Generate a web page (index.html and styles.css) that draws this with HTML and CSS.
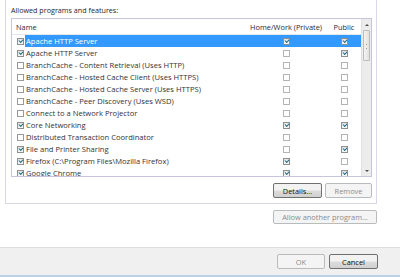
FILE: index.html
```html
<!DOCTYPE html>
<html lang="en">
<head>
    <meta charset="UTF-8">
    <title>Allowed programs</title>
    <link rel="stylesheet" href="styles.css">
</head>
<body>
    <div class="window">
        <div class="content">
            <div class="group">
                <p class="caption">Allowed programs and features:</p>
                <div class="listbox">
                    <div class="list">
                        <div class="list-head">
                            <span class="col-name">Name</span>
                            <span class="col-check">Home/Work (Private)</span>
                            <span class="col-check">Public</span>
                        </div>
                        <div class="rows">
                            <div class="row selected">
                                <span class="col-name"><span class="cb on"></span><span class="label">Apache HTTP Server</span></span>
                                <span class="col-check"><span class="cb on"></span></span>
                                <span class="col-check"><span class="cb on"></span></span>
                            </div>
                            <div class="row">
                                <span class="col-name"><span class="cb on"></span><span class="label">Apache HTTP Server</span></span>
                                <span class="col-check"><span class="cb"></span></span>
                                <span class="col-check"><span class="cb on"></span></span>
                            </div>
                            <div class="row">
                                <span class="col-name"><span class="cb"></span><span class="label">BranchCache - Content Retrieval (Uses HTTP)</span></span>
                                <span class="col-check"><span class="cb"></span></span>
                                <span class="col-check"><span class="cb"></span></span>
                            </div>
                            <div class="row">
                                <span class="col-name"><span class="cb"></span><span class="label">BranchCache - Hosted Cache Client (Uses HTTPS)</span></span>
                                <span class="col-check"><span class="cb"></span></span>
                                <span class="col-check"><span class="cb"></span></span>
                            </div>
                            <div class="row">
                                <span class="col-name"><span class="cb"></span><span class="label">BranchCache - Hosted Cache Server (Uses HTTPS)</span></span>
                                <span class="col-check"><span class="cb"></span></span>
                                <span class="col-check"><span class="cb"></span></span>
                            </div>
                            <div class="row">
                                <span class="col-name"><span class="cb"></span><span class="label">BranchCache - Peer Discovery (Uses WSD)</span></span>
                                <span class="col-check"><span class="cb"></span></span>
                                <span class="col-check"><span class="cb"></span></span>
                            </div>
                            <div class="row">
                                <span class="col-name"><span class="cb"></span><span class="label">Connect to a Network Projector</span></span>
                                <span class="col-check"><span class="cb"></span></span>
                                <span class="col-check"><span class="cb"></span></span>
                            </div>
                            <div class="row">
                                <span class="col-name"><span class="cb on"></span><span class="label">Core Networking</span></span>
                                <span class="col-check"><span class="cb on"></span></span>
                                <span class="col-check"><span class="cb on"></span></span>
                            </div>
                            <div class="row">
                                <span class="col-name"><span class="cb"></span><span class="label">Distributed Transaction Coordinator</span></span>
                                <span class="col-check"><span class="cb"></span></span>
                                <span class="col-check"><span class="cb"></span></span>
                            </div>
                            <div class="row">
                                <span class="col-name"><span class="cb on"></span><span class="label">File and Printer Sharing</span></span>
                                <span class="col-check"><span class="cb"></span></span>
                                <span class="col-check"><span class="cb on"></span></span>
                            </div>
                            <div class="row">
                                <span class="col-name"><span class="cb on"></span><span class="label">Firefox (C:\Program Files\Mozilla Firefox)</span></span>
                                <span class="col-check"><span class="cb on"></span></span>
                                <span class="col-check"><span class="cb"></span></span>
                            </div>
                            <div class="row">
                                <span class="col-name"><span class="cb on"></span><span class="label">Google Chrome</span></span>
                                <span class="col-check"><span class="cb on"></span></span>
                                <span class="col-check"><span class="cb on"></span></span>
                            </div>
                        </div>
                    </div>
                    <div class="scrollbar">
                        <span class="arrow up"></span>
                        <span class="track"><span class="thumb"></span></span>
                        <span class="arrow down"></span>
                    </div>
                </div>
                <div class="list-actions">
                    <button class="btn details">Details...</button>
                    <button class="btn remove" disabled>Remove</button>
                </div>
            </div>
            <div class="add-row">
                <button class="btn add" disabled>Allow another program...</button>
            </div>
        </div>
        <div class="footer">
            <button class="btn ok" disabled>OK</button>
            <button class="btn cancel">Cancel</button>
        </div>
    </div>
</body>
</html>
```

FILE: styles.css
```css
* {
    margin: 0;
    padding: 0;
    box-sizing: border-box;
}

body {
    font-family: "Open Sans", "Noto Sans", sans-serif;
    font-size: 7.2px;
    color: #1e1e1e;
    background-color: white;
}

.window {
    display: flex;
    flex-direction: column;
    width: 400px;
    height: 277px;
}

.content {
    flex: 1;
    padding: 0 23px 0 5px;
}

.group {
    border: 1px solid #d7d7e8;
    border-top: none;
    padding: 0 4px 5px 5px;
}

.caption {
    line-height: 12px;
    padding-top: 4px;
    margin-bottom: 2px;
}

/* list with columns */
.listbox {
    display: flex;
    height: 159px;
    border: 1px solid #c5c5dc;
    overflow: hidden;
}

.list {
    flex: 1;
    overflow: hidden;
}

.list-head,
.row {
    display: grid;
    grid-template-columns: 1fr 82px 34px;
    align-items: center;
}

.list-head {
    height: 16px;
    border-bottom: 1px solid #e3e8ef;
    color: #1e2a3a;
    font-size: 7.4px;
}

.list-head .col-name {
    padding-left: 4px;
}

.col-check {
    text-align: center;
}

.row {
    height: 12px;
    color: #333;
    font-size: 7.6px;
}

.row .col-name {
    display: flex;
    align-items: center;
    height: 12px;
    padding-left: 5px;
    white-space: nowrap;
}

.label {
    padding-left: 2px;
    line-height: 12px;
}

.row.selected {
    background: linear-gradient(to right, white 13px, #3399ff 13px);
    color: white;
}

.row .col-check {
    display: flex;
    justify-content: center;
}

.cb {
    position: relative;
    display: inline-block;
    width: 7px;
    height: 7px;
    border: 1px solid #9a9a9a;
    background-color: white;
    flex-shrink: 0;
}

.col-check .cb {
    border-color: #b4b4b4;
}

.cb.on {
    border-color: #8e8f8f;
    background: linear-gradient(#e4e4e4, #f7f7f7);
}

.cb.on::after {
    content: "";
    position: absolute;
    left: 1px;
    top: 0;
    width: 3px;
    height: 2px;
    border-left: 1px solid #1f6f86;
    border-bottom: 1px solid #1f6f86;
    transform: rotate(-45deg);
}

.scrollbar {
    display: flex;
    flex-direction: column;
    width: 10px;
    background-color: #ececec;
    border-left: 1px solid #e1e1e1;
}

.arrow {
    display: flex;
    justify-content: center;
    align-items: center;
    height: 11px;
}

.arrow::after {
    content: "";
    border-left: 2px solid transparent;
    border-right: 2px solid transparent;
}

.arrow.up::after {
    border-bottom: 2px solid #4d4d4d;
}

.arrow.down::after {
    border-top: 2px solid #4d4d4d;
}

.track {
    flex: 1;
    padding: 0 1px;
}

.thumb {
    display: block;
    height: 31px;
    border: 1px solid #bcbcbc;
    border-radius: 1px;
    background: linear-gradient(to right, #f3f3f3, #e2e2e2);
    position: relative;
}

.thumb::after {
    content: "";
    position: absolute;
    left: 2px;
    right: 2px;
    top: 13px;
    height: 3px;
    border-top: 1px solid #9a9a9a;
    border-bottom: 1px solid #9a9a9a;
}

/* buttons */
.btn {
    font-family: inherit;
    font-size: 7.4px;
    height: 15px;
    border: 1px solid #707070;
    border-radius: 2px;
    background: linear-gradient(#f2f2f2 45%, #dcdcdc 55%, #d0d0d0);
    color: #111;
}

.btn:disabled {
    border-color: #b8bcbf;
    background: #f4f4f4;
    color: #8c8c8c;
}

.list-actions {
    display: flex;
    justify-content: flex-end;
    gap: 3px;
    margin-top: 6px;
}

.details {
    width: 49px;
}

.remove {
    width: 47px;
}

.add-row {
    display: flex;
    justify-content: flex-end;
    margin-top: 6px;
}

.add {
    width: 104px;
    height: 14px;
}

.footer {
    display: flex;
    justify-content: flex-end;
    gap: 4px;
    height: 30px;
    padding: 6px 22px 0 0;
    background-color: #f0f0f0;
    border-top: 1px solid #dcdcdc;
    border-bottom: 2px solid #bcd0e6;
}

.ok {
    width: 48px;
}

.cancel {
    width: 49px;
}
```
